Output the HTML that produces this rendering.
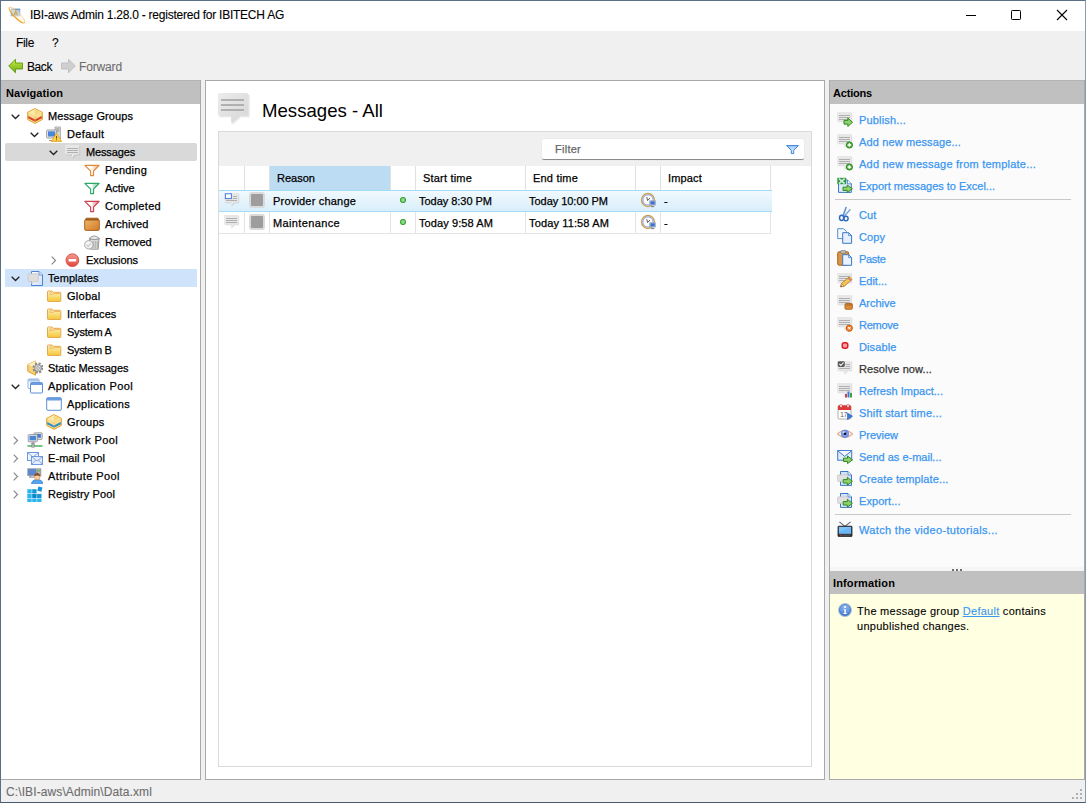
<!DOCTYPE html>
<html><head><meta charset="utf-8"><title>IBI-aws Admin</title>
<style>
*{box-sizing:border-box;margin:0;padding:0}
html,body{width:1086px;height:803px;overflow:hidden;background:#f0f0f0}
body{font-family:"Liberation Sans",sans-serif;font-size:11px;color:#000;position:relative}
.abs{position:absolute}
.t{white-space:nowrap;position:absolute;line-height:14px;-webkit-text-stroke:.25px}
.b{position:absolute}
a{color:#3a96f0}
</style></head><body>

<div class="b" style="left:0px;top:0px;width:1086px;height:803px;background:#f0f0f0;border:1px solid #5a7088;border-right-color:#8a9ab0;border-bottom-color:#4a5a6c;"></div>
<div class="b" style="left:1px;top:1px;width:1084px;height:30px;background:#fff;"></div>
<svg class="abs" style="left:8px;top:6px" width="18" height="18" viewBox="0 0 18 18"><defs><linearGradient id="rg" x1="0" y1="0" x2="0" y2="1"><stop offset="0" stop-color="#f6c060" stop-opacity=".25"/><stop offset=".55" stop-color="#f2b040" stop-opacity=".7"/><stop offset="1" stop-color="#eea020"/></linearGradient></defs><rect x="3" y="3" width="9" height="7" fill="#a9c9ee" stroke="#7f9cc0" stroke-width=".5"/><path d="M3 3.3h9" stroke="#5c7ea8" stroke-width=".8"/><path d="M6 9.2 L7.6 4.8 L9.6 9.2 M6.6 7.8h2.4" fill="none" stroke="#8a7414" stroke-width="1.2"/><ellipse cx="9" cy="9" rx="10.6" ry="2.9" transform="rotate(45 9 9)" fill="#fff4d8" fill-opacity=".45" stroke="url(#rg)" stroke-width="1.3"/></svg>
<span class="t" style="left:30px;top:8px;font-size:12px;-webkit-text-stroke:.1px;letter-spacing:-0.238px;">IBI-aws Admin 1.28.0 - registered for IBITECH AG</span>
<svg class="abs" style="left:960px;top:5px" width="120" height="22" viewBox="0 0 120 22"><path d="M6 10.5h10" stroke="#000" stroke-width="1"/><rect x="51.5" y="5.5" width="9" height="9" fill="none" stroke="#000" stroke-width="1" rx=".8"/><path d="M97 5l10 10M107 5l-10 10" stroke="#000" stroke-width="1.1"/></svg>
<span class="t" style="left:16px;top:36px;font-size:12px;-webkit-text-stroke:.1px;letter-spacing:-0.336px;">File</span>
<span class="t" style="left:52px;top:36px;font-size:12px;-webkit-text-stroke:.1px;letter-spacing:-1.688px;">?</span>
<svg class="abs" style="left:8px;top:58px" width="16" height="16" viewBox="0 0 16 16"><defs><linearGradient id="gg" x1="0" y1="0" x2="0" y2="1"><stop offset="0" stop-color="#c8e84a"/><stop offset="1" stop-color="#6fae10"/></linearGradient></defs><path d="M.7 8 L7.5 1.2 V5 H14.5 V11 H7.5 V14.8 Z" fill="url(#gg)" stroke="#5c9a0c" stroke-width=".9" stroke-linejoin="round"/></svg>
<span class="t" style="left:27px;top:60px;font-size:12px;-webkit-text-stroke:.1px;letter-spacing:-0.422px;">Back</span>
<svg class="abs" style="left:60px;top:58px" width="16" height="16" viewBox="0 0 16 16"><path d="M15.3 8 L8.5 1.2 V5 H1.5 V11 H8.5 V14.8 Z" fill="#cfcfcf" stroke="#bdbdbd" stroke-width=".9" stroke-linejoin="round"/></svg>
<span class="t" style="left:79px;top:60px;color:#6d6d6d;font-size:12px;-webkit-text-stroke:.1px;letter-spacing:-0.145px;">Forward</span>
<div class="b" style="left:1px;top:80px;width:200px;height:700px;background:#fff;border-right:1px solid #a9a9a9;border-bottom:1px solid #a9a9a9;"></div>
<div class="b" style="left:1px;top:80px;width:199px;height:24px;background:#c0c0c0;border-top:1px solid #b4b4b4;"></div>
<span class="t" style="left:6px;top:86px;font-weight:bold;-webkit-text-stroke:0;letter-spacing:0.077px;">Navigation</span>
<div class="b" style="left:5px;top:143px;width:192px;height:18px;background:#d9d9d9;border-radius:2px;"></div>
<div class="b" style="left:5px;top:269px;width:192px;height:18px;background:#cfe4fb;"></div>
<svg class="abs" style="left:11px;top:114px" width="9" height="6" viewBox="0 0 9 6"><path d="M.7 .7 L4.5 4.5 L8.3 .7" fill="none" stroke="#262626" stroke-width="1.4"/></svg>
<svg class="abs" style="left:27px;top:108px" width="16" height="16" viewBox="0 0 16 16"><path d="M8 .6 L15.3 4.3 V11.5 L8 15.4 L.7 11.5 V4.3 Z" fill="#f9dc8c" stroke="#e0a030" stroke-width="1"/><path d="M1.2 7.9 L8 11.4 L14.8 7.9 V10.3 L8 13.8 L1.2 10.3 Z" fill="#d8402a"/><path d="M1.2 4.5 L8 8 L14.8 4.5 L8 1.2Z" fill="#fbe9ac"/><path d="M8 1.6 L8 7.6 L13.6 4.6Z" fill="#f6cf6a" opacity=".7"/><path d="M8 8 V15" stroke="#e8b860" stroke-width=".6"/></svg>
<span class="t" style="left:48px;top:109px;letter-spacing:0.088px;">Message Groups</span>
<svg class="abs" style="left:30px;top:132px" width="9" height="6" viewBox="0 0 9 6"><path d="M.7 .7 L4.5 4.5 L8.3 .7" fill="none" stroke="#262626" stroke-width="1.4"/></svg>
<svg class="abs" style="left:46px;top:126px" width="16" height="16" viewBox="0 0 16 16"><rect x="9" y="1" width="5.5" height="12" fill="#d8d8d8" stroke="#9a9a9a" stroke-width=".7"/><rect x="10.3" y="2.5" width="3" height="1" fill="#888"/><rect x="10.3" y="4.5" width="3" height="1" fill="#888"/><rect x=".6" y="4" width="10" height="8" rx="1" fill="#e8e8e8" stroke="#8c8c8c" stroke-width=".8"/><rect x="2" y="5.3" width="7.2" height="5.2" fill="#4a86d8"/><path d="M3 14.5h6" stroke="#999" stroke-width="1"/><path d="M10.5 7 L15.6 15.4 H5.4 Z" fill="#fbd34a" stroke="#e09a20" stroke-width=".8" stroke-linejoin="round"/><path d="M10.5 10v2.6M10.5 13.4v.9" stroke="#7a4a00" stroke-width="1"/></svg>
<span class="t" style="left:67px;top:127px;letter-spacing:0.377px;">Default</span>
<svg class="abs" style="left:49px;top:150px" width="9" height="6" viewBox="0 0 9 6"><path d="M.7 .7 L4.5 4.5 L8.3 .7" fill="none" stroke="#262626" stroke-width="1.4"/></svg>
<svg class="abs" style="left:65px;top:144px" width="16" height="16" viewBox="0 0 16 16"><path d="M1.3 2h14v9.4H11L7.6 15v-3.6H1.3z" fill="#000" opacity=".07"/><path d="M.9 1.6h14v9.4H10.8L7.3 14.6v-3.6H.9z" fill="#000" opacity=".06"/><path d="M.2 1h14.2v9.4H10.3L7 14v-3.6H.2z" fill="#e7e7e7"/><path d="M2 4.5h11M2 6.5h11M2 8.5h11" stroke="#b0b0b0" stroke-width="1"/></svg>
<span class="t" style="left:86px;top:145px;letter-spacing:-0.143px;">Messages</span>
<svg class="abs" style="left:84px;top:162px" width="16" height="16" viewBox="0 0 16 16"><defs><linearGradient id="fge08a3c" x1="0" y1="0" x2="1" y2="0"><stop offset=".45" stop-color="#fff"/><stop offset="1" stop-color="#e08a3c" stop-opacity=".55"/></linearGradient></defs><path d="M.8 3.4 H15.2 L9.6 9 V13.6 H6.6 V9 Z" fill="url(#fge08a3c)" stroke="#e08a3c" stroke-width="1.1" stroke-linejoin="round"/></svg>
<span class="t" style="left:105px;top:163px;letter-spacing:0.232px;">Pending</span>
<svg class="abs" style="left:84px;top:180px" width="16" height="16" viewBox="0 0 16 16"><defs><linearGradient id="fg2fa86a" x1="0" y1="0" x2="1" y2="0"><stop offset=".45" stop-color="#fff"/><stop offset="1" stop-color="#2fa86a" stop-opacity=".55"/></linearGradient></defs><path d="M.8 3.4 H15.2 L9.6 9 V13.6 H6.6 V9 Z" fill="url(#fg2fa86a)" stroke="#2fa86a" stroke-width="1.1" stroke-linejoin="round"/></svg>
<span class="t" style="left:105px;top:181px;letter-spacing:-0.078px;">Active</span>
<svg class="abs" style="left:84px;top:198px" width="16" height="16" viewBox="0 0 16 16"><defs><linearGradient id="fgd04050" x1="0" y1="0" x2="1" y2="0"><stop offset=".45" stop-color="#fff"/><stop offset="1" stop-color="#d04050" stop-opacity=".55"/></linearGradient></defs><path d="M.8 3.4 H15.2 L9.6 9 V13.6 H6.6 V9 Z" fill="url(#fgd04050)" stroke="#d04050" stroke-width="1.1" stroke-linejoin="round"/></svg>
<span class="t" style="left:105px;top:199px;letter-spacing:0.311px;">Completed</span>
<svg class="abs" style="left:84px;top:216px" width="16" height="16" viewBox="0 0 16 16"><defs><linearGradient id="ar" x1="0" y1="0" x2="1" y2="1"><stop offset="0" stop-color="#f2b86c"/><stop offset="1" stop-color="#d07c28"/></linearGradient></defs><path d="M2.2 2.2 H13.8 L15.3 4.6 V13 Q15.3 14.4 13.9 14.4 H2.1 Q.7 14.4 .7 13 V4.6 Z" fill="url(#ar)" stroke="#a8641e" stroke-width="1" stroke-linejoin="round"/><path d="M2.4 2.6 H13.6 L14.8 4.6 H1.2 Z" fill="#9a5a1c"/></svg>
<span class="t" style="left:105px;top:217px;letter-spacing:0.088px;">Archived</span>
<svg class="abs" style="left:84px;top:234px" width="16" height="16" viewBox="0 0 16 16"><path d="M5.6 5 H15 L14.2 15.2 H6.6 Z" fill="#dcdcdc" stroke="#909090" stroke-width=".9"/><path d="M5 4.6 Q10.2 -.6 15.6 4.6 Q10.2 6.6 5 4.6Z" fill="#ececec" stroke="#909090" stroke-width=".9"/><path d="M9 7v7M11.2 7v7M13.3 7v7" stroke="#a4a4a4" stroke-width=".9"/><circle cx="4.8" cy="10.8" r="4.2" fill="#f2f2f2" stroke="#a0a0a0" stroke-width=".9"/><path d="M2.6 10.8l1.6 1.6 2.8-3" fill="none" stroke="#c8c8c8" stroke-width="1.1"/></svg>
<span class="t" style="left:105px;top:235px;letter-spacing:-0.083px;">Removed</span>
<svg class="abs" style="left:51px;top:256px" width="6" height="9" viewBox="0 0 6 9"><path d="M.7 .7 L4.5 4.5 L.7 8.3" fill="none" stroke="#8a8a8a" stroke-width="1.2"/></svg>
<svg class="abs" style="left:65px;top:252px" width="16" height="16" viewBox="0 0 16 16"><defs><linearGradient id="ex" x1="0" y1="0" x2="0" y2="1"><stop offset="0" stop-color="#f49a90"/><stop offset="1" stop-color="#e0443a"/></linearGradient></defs><circle cx="7.4" cy="8.2" r="6.4" fill="url(#ex)" stroke="#d8584e" stroke-width="1"/><rect x="3.6" y="7" width="7.6" height="2.5" rx=".5" fill="#fff"/></svg>
<span class="t" style="left:86px;top:253px;letter-spacing:-0.058px;">Exclusions</span>
<svg class="abs" style="left:11px;top:276px" width="9" height="6" viewBox="0 0 9 6"><path d="M.7 .7 L4.5 4.5 L8.3 .7" fill="none" stroke="#262626" stroke-width="1.4"/></svg>
<svg class="abs" style="left:27px;top:270px" width="16" height="16" viewBox="0 0 16 16"><defs><linearGradient id="tp" x1="0" y1="0" x2="1" y2="1"><stop offset="0" stop-color="#fff"/><stop offset="1" stop-color="#cfe0f6"/></linearGradient></defs><path d="M4.5 1.5 H12 L15.5 5 V15.5 H4.5 Z" fill="url(#tp)" stroke="#4f81d6" stroke-width="1" stroke-linejoin="round"/><path d="M12 1.5 V5 H15.5" fill="#e8f0fc" stroke="#4f81d6" stroke-width=".8"/><path d="M1 4.6 Q1 3.8 1.8 3.8 H10.6 Q11.4 3.8 11.4 4.6 V10.8 Q11.4 11.6 10.6 11.6 H6.8 L4.6 14 L4.8 11.6 H1.8 Q1 11.6 1 10.8Z" fill="#dedede" stroke="#c4c4c4" stroke-width=".7"/></svg>
<span class="t" style="left:48px;top:271px;letter-spacing:0.040px;">Templates</span>
<svg class="abs" style="left:46px;top:288px" width="16" height="16" viewBox="0 0 16 16"><defs><linearGradient id="fo" x1="0" y1="0" x2="0" y2="1"><stop offset="0" stop-color="#fef4c4"/><stop offset="1" stop-color="#f5c632"/></linearGradient></defs><path d="M1.5 3.8 Q1.5 3 2.3 3 H6 L7.2 4.3 H14 Q14.8 4.3 14.8 5.1 V12.7 Q14.8 13.5 14 13.5 H2.3 Q1.5 13.5 1.5 12.7Z" fill="url(#fo)" stroke="#e6a84e" stroke-width="1"/><path d="M3 6.2 H7.6 L8.6 5.5 H13.6" fill="none" stroke="#e9b25c" stroke-width=".9"/><path d="M3 4.8h3.4" stroke="#f1c070" stroke-width=".9"/></svg>
<span class="t" style="left:67px;top:289px;letter-spacing:0.284px;">Global</span>
<svg class="abs" style="left:46px;top:306px" width="16" height="16" viewBox="0 0 16 16"><defs><linearGradient id="fo" x1="0" y1="0" x2="0" y2="1"><stop offset="0" stop-color="#fef4c4"/><stop offset="1" stop-color="#f5c632"/></linearGradient></defs><path d="M1.5 3.8 Q1.5 3 2.3 3 H6 L7.2 4.3 H14 Q14.8 4.3 14.8 5.1 V12.7 Q14.8 13.5 14 13.5 H2.3 Q1.5 13.5 1.5 12.7Z" fill="url(#fo)" stroke="#e6a84e" stroke-width="1"/><path d="M3 6.2 H7.6 L8.6 5.5 H13.6" fill="none" stroke="#e9b25c" stroke-width=".9"/><path d="M3 4.8h3.4" stroke="#f1c070" stroke-width=".9"/></svg>
<span class="t" style="left:67px;top:307px;letter-spacing:0.119px;">Interfaces</span>
<svg class="abs" style="left:46px;top:324px" width="16" height="16" viewBox="0 0 16 16"><defs><linearGradient id="fo" x1="0" y1="0" x2="0" y2="1"><stop offset="0" stop-color="#fef4c4"/><stop offset="1" stop-color="#f5c632"/></linearGradient></defs><path d="M1.5 3.8 Q1.5 3 2.3 3 H6 L7.2 4.3 H14 Q14.8 4.3 14.8 5.1 V12.7 Q14.8 13.5 14 13.5 H2.3 Q1.5 13.5 1.5 12.7Z" fill="url(#fo)" stroke="#e6a84e" stroke-width="1"/><path d="M3 6.2 H7.6 L8.6 5.5 H13.6" fill="none" stroke="#e9b25c" stroke-width=".9"/><path d="M3 4.8h3.4" stroke="#f1c070" stroke-width=".9"/></svg>
<span class="t" style="left:67px;top:325px;letter-spacing:-0.221px;">System A</span>
<svg class="abs" style="left:46px;top:342px" width="16" height="16" viewBox="0 0 16 16"><defs><linearGradient id="fo" x1="0" y1="0" x2="0" y2="1"><stop offset="0" stop-color="#fef4c4"/><stop offset="1" stop-color="#f5c632"/></linearGradient></defs><path d="M1.5 3.8 Q1.5 3 2.3 3 H6 L7.2 4.3 H14 Q14.8 4.3 14.8 5.1 V12.7 Q14.8 13.5 14 13.5 H2.3 Q1.5 13.5 1.5 12.7Z" fill="url(#fo)" stroke="#e6a84e" stroke-width="1"/><path d="M3 6.2 H7.6 L8.6 5.5 H13.6" fill="none" stroke="#e9b25c" stroke-width=".9"/><path d="M3 4.8h3.4" stroke="#f1c070" stroke-width=".9"/></svg>
<span class="t" style="left:67px;top:343px;letter-spacing:-0.322px;">System B</span>
<svg class="abs" style="left:27px;top:360px" width="16" height="16" viewBox="0 0 16 16"><path d="M8.5 1 L.8 4.6 V11.4 L8.5 15.2 Z" fill="#f8d27a" stroke="#e0a030" stroke-width="1" stroke-linejoin="round"/><path d="M8.5 1 L.8 4.6 L8.5 8.2Z" fill="#fdeebc"/><circle cx="11" cy="8" r="4.3" fill="none" stroke="#8c8c8c" stroke-width="2.6" stroke-dasharray="2 1.38"/><circle cx="11" cy="8" r="3.3" fill="#e2e2e2" stroke="#8a8a8a" stroke-width=".9"/><circle cx="11" cy="8" r="1.3" fill="#fff" stroke="#8a8a8a" stroke-width=".8"/></svg>
<span class="t" style="left:48px;top:361px;letter-spacing:-0.014px;">Static Messages</span>
<svg class="abs" style="left:11px;top:384px" width="9" height="6" viewBox="0 0 9 6"><path d="M.7 .7 L4.5 4.5 L8.3 .7" fill="none" stroke="#262626" stroke-width="1.4"/></svg>
<svg class="abs" style="left:27px;top:378px" width="16" height="16" viewBox="0 0 16 16"><rect x="1" y="1" width="11" height="9.5" rx="1" fill="#fff" stroke="#8fb0dc" stroke-width="1"/><rect x="1" y="1" width="11" height="2.4" rx="1" fill="#a8c4e8"/><rect x="3.5" y="4.5" width="12" height="10.5" rx="1" fill="#fff" stroke="#5a8fd8" stroke-width="1"/><rect x="3.5" y="4.5" width="12" height="2.6" rx="1" fill="#6a9ce0"/></svg>
<span class="t" style="left:48px;top:379px;letter-spacing:0.382px;">Application Pool</span>
<svg class="abs" style="left:46px;top:396px" width="16" height="16" viewBox="0 0 16 16"><rect x=".7" y="1.7" width="14.6" height="12.6" rx="1.2" fill="#fff" stroke="#5a8fd8" stroke-width="1"/><rect x=".7" y="1.7" width="14.6" height="2.8" rx="1.2" fill="#6a9ce0"/></svg>
<span class="t" style="left:67px;top:397px;letter-spacing:0.306px;">Applications</span>
<svg class="abs" style="left:46px;top:414px" width="16" height="16" viewBox="0 0 16 16"><path d="M8 .6 L15.3 4.3 V11.5 L8 15.4 L.7 11.5 V4.3 Z" fill="#f9dc8c" stroke="#e0a030" stroke-width="1"/><path d="M1.2 7.9 L8 11.4 L14.8 7.9 V10.3 L8 13.8 L1.2 10.3 Z" fill="#2a8fd0"/><path d="M1.2 4.5 L8 8 L14.8 4.5 L8 1.2Z" fill="#fbe9ac"/><path d="M8 1.6 L8 7.6 L13.6 4.6Z" fill="#f6cf6a" opacity=".7"/><path d="M8 8 V15" stroke="#e8b860" stroke-width=".6"/></svg>
<span class="t" style="left:67px;top:415px;letter-spacing:0.237px;">Groups</span>
<svg class="abs" style="left:13px;top:436px" width="6" height="9" viewBox="0 0 6 9"><path d="M.7 .7 L4.5 4.5 L.7 8.3" fill="none" stroke="#8a8a8a" stroke-width="1.2"/></svg>
<svg class="abs" style="left:27px;top:432px" width="16" height="16" viewBox="0 0 16 16"><rect x="7" y=".8" width="8.2" height="6.6" rx=".8" fill="#e4e4e4" stroke="#8a8a8a" stroke-width=".8"/><rect x="8.3" y="2" width="5.6" height="3.8" fill="#4a7ad0"/><rect x="1.2" y="2.6" width="9.2" height="7.2" rx=".8" fill="#e4e4e4" stroke="#8a8a8a" stroke-width=".8"/><rect x="2.5" y="3.9" width="6.6" height="4.4" fill="#4a86d8"/><path d="M4 11.2h4M6 10v3" stroke="#8a8a8a" stroke-width="1"/><path d="M.5 14h15" stroke="#3cb050" stroke-width="1.4"/><rect x="4.8" y="12.6" width="2.6" height="2.6" fill="#b8b8b8" stroke="#777" stroke-width=".5"/></svg>
<span class="t" style="left:48px;top:433px;letter-spacing:0.382px;">Network Pool</span>
<svg class="abs" style="left:13px;top:454px" width="6" height="9" viewBox="0 0 6 9"><path d="M.7 .7 L4.5 4.5 L.7 8.3" fill="none" stroke="#8a8a8a" stroke-width="1.2"/></svg>
<svg class="abs" style="left:27px;top:450px" width="16" height="16" viewBox="0 0 16 16"><rect x=".5" y="2.5" width="11" height="8" fill="#eef3fd" stroke="#7098e2" stroke-width="1"/><path d="M.8 2.8 L6 7 L11.2 2.8" fill="none" stroke="#7098e2" stroke-width=".8"/><rect x="4.5" y="6.5" width="11" height="8" fill="#e4edfc" stroke="#7098e2" stroke-width="1"/><path d="M4.8 6.8 L10 11 L15.2 6.8M4.8 14.2 L8.6 10M15.2 14.2 L11.4 10" fill="none" stroke="#7098e2" stroke-width=".8"/></svg>
<span class="t" style="left:48px;top:451px;letter-spacing:0.068px;">E-mail Pool</span>
<svg class="abs" style="left:13px;top:472px" width="6" height="9" viewBox="0 0 6 9"><path d="M.7 .7 L4.5 4.5 L.7 8.3" fill="none" stroke="#8a8a8a" stroke-width="1.2"/></svg>
<svg class="abs" style="left:27px;top:468px" width="16" height="16" viewBox="0 0 16 16"><rect x=".8" y=".8" width="8.6" height="6.8" fill="#5d86cc" stroke="#8a96aa" stroke-width=".8"/><rect x="10.3" y=".8" width="3.6" height="7" fill="#b8b8b8" stroke="#7a7a7a" stroke-width=".6"/><rect x="11.2" y="2" width="1.8" height="1.6" fill="#4c4"/><path d="M2 9.2h5.5M3.5 8v1" stroke="#9a9a9a" stroke-width="1.3"/><path d="M4.4 15.8 Q5 11.6 10.2 11.6 Q15.4 11.6 15.8 15.8Z" fill="#56a4f0" stroke="#2a70c8" stroke-width=".6"/><circle cx="10.2" cy="8.8" r="2.9" fill="#f6cfa4" stroke="#c88a50" stroke-width=".5"/><path d="M7.2 8.4 Q7.4 5 10.2 5 Q13 5 13.2 8.4 Q10.2 6.4 7.2 8.4Z" fill="#8a4a1c"/></svg>
<span class="t" style="left:48px;top:469px;letter-spacing:0.425px;">Attribute Pool</span>
<svg class="abs" style="left:13px;top:490px" width="6" height="9" viewBox="0 0 6 9"><path d="M.7 .7 L4.5 4.5 L.7 8.3" fill="none" stroke="#8a8a8a" stroke-width="1.2"/></svg>
<svg class="abs" style="left:27px;top:486px" width="16" height="16" viewBox="0 0 16 16"><g fill="#2db5ee"><rect x=".3" y="3.2" width="4.4" height="4.2"/><rect x="5.2" y="3.2" width="4.4" height="4.2" fill="#1196d8"/><rect x=".3" y="7.9" width="4.4" height="4.2"/><rect x="5.2" y="7.9" width="4.4" height="4.2" fill="#0b86c9"/><rect x="10.1" y="7.9" width="4.4" height="4.2" fill="#1196d8"/><rect x=".3" y="12.6" width="4.4" height="3.4"/><rect x="5.2" y="12.6" width="4.4" height="3.4"/><rect x="10.1" y="12.6" width="4.4" height="3.4"/><rect x="10.8" y="1" width="4.2" height="4.2" fill="#1196d8" transform="rotate(14 12.9 3.1)"/></g></svg>
<span class="t" style="left:48px;top:487px;letter-spacing:0.121px;">Registry Pool</span>
<div class="b" style="left:205px;top:80px;width:620px;height:700px;background:#fff;border:1px solid #a9a9a9;"></div>
<svg class="abs" style="left:218px;top:93px" width="34" height="34" viewBox="0 0 34 34"><path d="M1.8 2h30.2v22.6H23.4L14.6 32.4v-7.8H1.8z" fill="#000" opacity=".05"/><path d="M1 1.2h30.2v22.6H22.6L13.8 31.6v-7.8H1z" fill="#000" opacity=".06"/><defs><linearGradient id="lm" x1="0" y1="0" x2="1" y2="1"><stop offset="0" stop-color="#ececec"/><stop offset="1" stop-color="#d6d6d6"/></linearGradient></defs><path d="M1.5 0H28.5Q30 0 30 1.5V21Q30 22.5 28.5 22.5H22L13.3 30.5L13 22.5H1.5Q0 22.5 0 21V1.5Q0 0 1.5 0Z" fill="url(#lm)"/><path d="M3 7h23M3 12h23M3 17h23" stroke="#b0b0b0" stroke-width="2"/></svg>
<span class="t" style="left:262px;top:100px;font-size:18.6px;letter-spacing:0.007px;line-height:22px;-webkit-text-stroke:0;">Messages - All</span>
<div class="b" style="left:218px;top:131px;width:594px;height:636px;background:#fff;border:1px solid #dadada;"></div>
<div class="b" style="left:219px;top:132px;width:592px;height:34px;background:#f0f0f0;"></div>
<div class="b" style="left:542px;top:139px;width:262px;height:21px;background:#fff;border-bottom:1px solid #8a8a8a;border-radius:2px;box-shadow:0 0 0 .5px #e6e6e6;"></div>
<span class="t" style="left:555px;top:142px;color:#666;letter-spacing:0.258px;">Filter</span>
<svg class="abs" style="left:786px;top:145px" width="13" height="10" viewBox="0 0 13 10"><defs><linearGradient id="fb" x1="0" y1="0" x2="0" y2="1"><stop offset="0" stop-color="#9cc8f8"/><stop offset="1" stop-color="#eef6ff"/></linearGradient></defs><path d="M.6 .6 H12.4 L7.7 5.4 V8.6 H5.3 V5.4 Z" fill="url(#fb)" stroke="#3f7fd6" stroke-width="1" stroke-linejoin="round"/></svg>
<div class="b" style="left:270px;top:166px;width:121px;height:24px;background:#bcdcf4;"></div>
<div class="b" style="left:219px;top:190px;width:552px;height:1px;background:#e4e4e4;"></div>
<div class="b" style="left:219px;top:190px;width:553px;height:22px;background:#e5f3fb;border-top:1px solid #a4dcf8;border-bottom:1px solid #a4dcf8;background:linear-gradient(#f0f9fe,#d9eefa);"></div>
<div class="b" style="left:219px;top:233px;width:552px;height:1px;background:#e4e4e4;"></div>
<div class="b" style="left:244px;top:166px;width:1px;height:24px;background:#e0e0e0;"></div>
<div class="b" style="left:244px;top:212px;width:1px;height:21px;background:#e4e4e4;"></div>
<div class="b" style="left:269px;top:166px;width:1px;height:24px;background:#e0e0e0;"></div>
<div class="b" style="left:269px;top:212px;width:1px;height:21px;background:#e4e4e4;"></div>
<div class="b" style="left:390px;top:166px;width:1px;height:24px;background:#e0e0e0;"></div>
<div class="b" style="left:390px;top:212px;width:1px;height:21px;background:#e4e4e4;"></div>
<div class="b" style="left:415px;top:166px;width:1px;height:24px;background:#e0e0e0;"></div>
<div class="b" style="left:415px;top:212px;width:1px;height:21px;background:#e4e4e4;"></div>
<div class="b" style="left:525px;top:166px;width:1px;height:24px;background:#e0e0e0;"></div>
<div class="b" style="left:525px;top:212px;width:1px;height:21px;background:#e4e4e4;"></div>
<div class="b" style="left:635px;top:166px;width:1px;height:24px;background:#e0e0e0;"></div>
<div class="b" style="left:635px;top:212px;width:1px;height:21px;background:#e4e4e4;"></div>
<div class="b" style="left:660px;top:166px;width:1px;height:24px;background:#e0e0e0;"></div>
<div class="b" style="left:660px;top:212px;width:1px;height:21px;background:#e4e4e4;"></div>
<div class="b" style="left:770px;top:166px;width:1px;height:24px;background:#e0e0e0;"></div>
<div class="b" style="left:770px;top:212px;width:1px;height:21px;background:#e4e4e4;"></div>
<span class="t" style="left:277px;top:171px;letter-spacing:0.013px;">Reason</span>
<span class="t" style="left:423px;top:171px;letter-spacing:0.192px;">Start time</span>
<span class="t" style="left:533px;top:171px;letter-spacing:0.197px;">End time</span>
<span class="t" style="left:668px;top:171px;letter-spacing:0.164px;">Impact</span>
<svg class="abs" style="left:224px;top:192px" width="16" height="16" viewBox="0 0 16 16"><path d="M1.3 2h14v9.4H11L7.6 15v-3.6H1.3z" fill="#000" opacity=".07"/><path d="M.9 1.6h14v9.4H10.8L7.3 14.6v-3.6H.9z" fill="#000" opacity=".06"/><path d="M.2 1h14.2v9.4H10.3L7 14v-3.6H.2z" fill="#e7e7e7"/><path d="M8.8 4.5h4.2M8.8 6.5h4.2M2 8.5h11" stroke="#b0b0b0" stroke-width="1"/><rect x="1.4" y="1.6" width="6" height="5" fill="#fff" stroke="#4a7cd4" stroke-width="1"/><path d="M1 1.7h6.8" stroke="#7aa0e4" stroke-width="1.2"/></svg>
<div class="b" style="left:249px;top:192px;width:16px;height:16px;background:#9d9d9d;border:2px solid #dadada;border-radius:3px;"></div>
<span class="t" style="left:273px;top:194px;letter-spacing:0.193px;">Provider change</span>
<svg class="abs" style="left:400px;top:197px" width="6" height="6" viewBox="0 0 6 6"><circle cx="3" cy="3" r="2.5" fill="#8fd88c" stroke="#3aa636" stroke-width="1.2"/></svg>
<span class="t" style="left:419px;top:194px;letter-spacing:-0.029px;">Today 8:30 PM</span>
<span class="t" style="left:529px;top:194px;letter-spacing:-0.036px;">Today 10:00 PM</span>
<svg class="abs" style="left:640px;top:192px" width="16" height="16" viewBox="0 0 16 16"><circle cx="8" cy="8" r="6.4" fill="#fff" stroke="#c9a257" stroke-width="1.5"/><circle cx="8" cy="8" r="5.1" fill="#fdfdff" stroke="#7f9be4" stroke-width=".9"/><path d="M6.8 5.2 L7.6 8.6 L10 6" fill="none" stroke="#5a5a5a" stroke-width="1"/><rect x="9.6" y="8.6" width="6" height="4.6" rx=".5" fill="#c8d4e8" stroke="#8a96a8" stroke-width=".6"/><rect x="10.4" y="9.3" width="4.4" height="3.2" fill="#3f72cc"/><path d="M11.2 14.6h3" stroke="#8a8a8a" stroke-width="1.2"/></svg>
<span class="t" style="left:664px;top:194px;letter-spacing:0.328px;">-</span>
<svg class="abs" style="left:224px;top:214px" width="16" height="16" viewBox="0 0 16 16"><path d="M1.3 2h14v9.4H11L7.6 15v-3.6H1.3z" fill="#000" opacity=".07"/><path d="M.9 1.6h14v9.4H10.8L7.3 14.6v-3.6H.9z" fill="#000" opacity=".06"/><path d="M.2 1h14.2v9.4H10.3L7 14v-3.6H.2z" fill="#e7e7e7"/><path d="M2 4.5h11M2 6.5h11M2 8.5h11" stroke="#b0b0b0" stroke-width="1"/></svg>
<div class="b" style="left:249px;top:214px;width:16px;height:16px;background:#9d9d9d;border:2px solid #dadada;border-radius:3px;"></div>
<span class="t" style="left:273px;top:216px;letter-spacing:0.364px;">Maintenance</span>
<svg class="abs" style="left:400px;top:219px" width="6" height="6" viewBox="0 0 6 6"><circle cx="3" cy="3" r="2.5" fill="#8fd88c" stroke="#3aa636" stroke-width="1.2"/></svg>
<span class="t" style="left:419px;top:216px;letter-spacing:0.094px;">Today 9:58 AM</span>
<span class="t" style="left:529px;top:216px;letter-spacing:0.137px;">Today 11:58 AM</span>
<svg class="abs" style="left:640px;top:214px" width="16" height="16" viewBox="0 0 16 16"><circle cx="8" cy="8" r="6.4" fill="#fff" stroke="#c9a257" stroke-width="1.5"/><circle cx="8" cy="8" r="5.1" fill="#fdfdff" stroke="#7f9be4" stroke-width=".9"/><path d="M6.8 5.2 L7.6 8.6 L10 6" fill="none" stroke="#5a5a5a" stroke-width="1"/><rect x="9.6" y="8.6" width="6" height="4.6" rx=".5" fill="#c8d4e8" stroke="#8a96a8" stroke-width=".6"/><rect x="10.4" y="9.3" width="4.4" height="3.2" fill="#3f72cc"/><path d="M11.2 14.6h3" stroke="#8a8a8a" stroke-width="1.2"/></svg>
<span class="t" style="left:664px;top:216px;letter-spacing:0.328px;">-</span>
<div class="b" style="left:829px;top:80px;width:256px;height:700px;background:#fbfbfb;border-left:1px solid #a9a9a9;border-bottom:1px solid #a9a9a9;border-right:1px solid #a9a9a9;"></div>
<div class="b" style="left:830px;top:80px;width:254px;height:24px;background:#c0c0c0;border-top:1px solid #b4b4b4;"></div>
<span class="t" style="left:833px;top:86px;font-weight:bold;-webkit-text-stroke:0;letter-spacing:-0.192px;">Actions</span>
<svg class="abs" style="left:837px;top:111px" width="16" height="16" viewBox="0 0 16 16"><path d="M1.3 2h14v9.4H11L7.6 15v-3.6H1.3z" fill="#000" opacity=".07"/><path d="M.9 1.6h14v9.4H10.8L7.3 14.6v-3.6H.9z" fill="#000" opacity=".06"/><path d="M.2 1h14.2v9.4H10.3L7 14v-3.6H.2z" fill="#e7e7e7"/><path d="M2 4.5h11M2 6.5h11M2 8.5h11" stroke="#b0b0b0" stroke-width="1"/><path d="M7 9.38 H10.82 V7 L15.5 11.25 L10.82 15.5 V13.12 H7 Z" fill="#8fcf6e" stroke="#2f8a1e" stroke-width="1" stroke-linejoin="round"/></svg>
<span class="t" style="left:859px;top:113px;color:#3a96f0;letter-spacing:0.175px;">Publish...</span>
<svg class="abs" style="left:837px;top:133px" width="16" height="16" viewBox="0 0 16 16"><path d="M1.3 2h14v9.4H11L7.6 15v-3.6H1.3z" fill="#000" opacity=".07"/><path d="M.9 1.6h14v9.4H10.8L7.3 14.6v-3.6H.9z" fill="#000" opacity=".06"/><path d="M.2 1h14.2v9.4H10.3L7 14v-3.6H.2z" fill="#e7e7e7"/><path d="M2 4.5h11M2 6.5h11M2 8.5h11" stroke="#b0b0b0" stroke-width="1"/><circle cx="12.4" cy="12" r="3.1" fill="#4fae3c" stroke="#2f8a22" stroke-width="1"/><path d="M12.4 10.2v3.6M10.6 12h3.6" stroke="#fff" stroke-width="1.3"/></svg>
<span class="t" style="left:859px;top:135px;color:#3a96f0;letter-spacing:0.129px;">Add new message...</span>
<svg class="abs" style="left:837px;top:155px" width="16" height="16" viewBox="0 0 16 16"><path d="M1.3 2h14v9.4H11L7.6 15v-3.6H1.3z" fill="#000" opacity=".07"/><path d="M.9 1.6h14v9.4H10.8L7.3 14.6v-3.6H.9z" fill="#000" opacity=".06"/><path d="M.2 1h14.2v9.4H10.3L7 14v-3.6H.2z" fill="#e7e7e7"/><path d="M2 4.5h11M2 6.5h11M2 8.5h11" stroke="#b0b0b0" stroke-width="1"/><circle cx="12.4" cy="12" r="3.1" fill="#4fae3c" stroke="#2f8a22" stroke-width="1"/><path d="M12.4 10.2v3.6M10.6 12h3.6" stroke="#fff" stroke-width="1.3"/></svg>
<span class="t" style="left:859px;top:157px;color:#3a96f0;letter-spacing:0.220px;">Add new message from template...</span>
<svg class="abs" style="left:837px;top:177px" width="16" height="16" viewBox="0 0 16 16"><path d="M1.5 3 H10.5 L14.3 6.8 V15.4 H1.5 Z" fill="#dfeafb" stroke="#3c78c8" stroke-width="1" stroke-linejoin="round"/><path d="M10.5 3 V6.8 H14.3" fill="#f4f8fe" stroke="#3c78c8" stroke-width=".8"/><path d="M.3 .8 H9.2 V7.2 H.3 Z" fill="#2f9a46"/><path d="M2 1.6 L7.6 6.6M7.6 1.6 L2 6.6" stroke="#d8f0dc" stroke-width="1.5"/><path d="M6 10.13 H10.23 V8 L15.4 11.8 L10.23 15.6 V13.47 H6 Z" fill="#8fcf6e" stroke="#2f8a1e" stroke-width="1" stroke-linejoin="round"/></svg>
<span class="t" style="left:859px;top:179px;color:#3a96f0;letter-spacing:-0.013px;">Export messages to Excel...</span>
<svg class="abs" style="left:837px;top:206px" width="16" height="16" viewBox="0 0 16 16"><path d="M9.2 1 L6.2 9.5" stroke="#5a8fd0" stroke-width="1.5" fill="none"/><path d="M13.4 3.2 L7 10.5" stroke="#7aa8e0" stroke-width="1.5" fill="none"/><ellipse cx="4.6" cy="11.8" rx="2.1" ry="2.6" fill="none" stroke="#2f6cc0" stroke-width="1.5"/><ellipse cx="9" cy="12.5" rx="2.1" ry="2.3" fill="none" stroke="#2f6cc0" stroke-width="1.5"/></svg>
<span class="t" style="left:859px;top:208px;color:#3a96f0;letter-spacing:0.125px;">Cut</span>
<svg class="abs" style="left:837px;top:228px" width="16" height="16" viewBox="0 0 16 16"><path d="M.7 .7 H6.6 L9.4 3.5 V10.6 H.7 Z" fill="#f4f8fd" stroke="#5a8fd0" stroke-width="1"/><path d="M5.7 4.7 H11.7 L14.6 7.6 V15.3 H5.7 Z" fill="#e6f0fc" stroke="#3c78c8" stroke-width="1"/><path d="M11.7 4.7 V7.6 H14.6" fill="none" stroke="#3c78c8" stroke-width=".8"/></svg>
<span class="t" style="left:859px;top:230px;color:#3a96f0;letter-spacing:0.078px;">Copy</span>
<svg class="abs" style="left:837px;top:250px" width="16" height="16" viewBox="0 0 16 16"><rect x=".7" y="1.8" width="11" height="13.4" rx="1.4" fill="#d8964a" stroke="#a8641c" stroke-width="1"/><rect x="3.6" y=".6" width="5.2" height="2.6" rx=".8" fill="#c0c0c0" stroke="#787878" stroke-width=".7"/><path d="M5.7 4.7 H11.7 L14.6 7.6 V15.3 H5.7 Z" fill="#eaf2fc" stroke="#3c78c8" stroke-width="1"/><path d="M11.7 4.7 V7.6 H14.6" fill="none" stroke="#3c78c8" stroke-width=".8"/></svg>
<span class="t" style="left:859px;top:252px;color:#3a96f0;letter-spacing:-0.328px;">Paste</span>
<svg class="abs" style="left:837px;top:272px" width="16" height="16" viewBox="0 0 16 16"><path d="M1.3 2h14v9.4H11L7.6 15v-3.6H1.3z" fill="#000" opacity=".07"/><path d="M.9 1.6h14v9.4H10.8L7.3 14.6v-3.6H.9z" fill="#000" opacity=".06"/><path d="M.2 1h14.2v9.4H10.3L7 14v-3.6H.2z" fill="#e7e7e7"/><path d="M2 4.5h11M2 6.5h11M2 8.5h11" stroke="#b0b0b0" stroke-width="1"/><path d="M3.6 14.8 L4.6 11.4 L12.4 4.8 L15 7.6 L7.2 14.2 Z" fill="#f7c35a" stroke="#b5791c" stroke-width=".8" stroke-linejoin="round"/><path d="M3.6 14.8 L4.6 11.4 L7.2 14.2Z" fill="#f6e3c0" stroke="#b5791c" stroke-width=".6"/><path d="M3.6 14.8l.5-1.5 1 .9z" fill="#333"/><path d="M11.2 5.8 L13.9 8.6" stroke="#d06a6a" stroke-width="1.2"/></svg>
<span class="t" style="left:859px;top:274px;color:#3a96f0;letter-spacing:-0.018px;">Edit...</span>
<svg class="abs" style="left:837px;top:294px" width="16" height="16" viewBox="0 0 16 16"><path d="M1.3 2h14v9.4H11L7.6 15v-3.6H1.3z" fill="#000" opacity=".07"/><path d="M.9 1.6h14v9.4H10.8L7.3 14.6v-3.6H.9z" fill="#000" opacity=".06"/><path d="M.2 1h14.2v9.4H10.3L7 14v-3.6H.2z" fill="#e7e7e7"/><path d="M2 4.5h11M2 6.5h11M2 8.5h11" stroke="#b0b0b0" stroke-width="1"/><rect x="8" y="9.5" width="7.4" height="5.8" rx="1" fill="#d98a3a" stroke="#b06a22" stroke-width=".9"/><path d="M8.3 11h6.8" stroke="#a05a18" stroke-width=".8"/></svg>
<span class="t" style="left:859px;top:296px;color:#3a96f0;letter-spacing:-0.027px;">Archive</span>
<svg class="abs" style="left:837px;top:316px" width="16" height="16" viewBox="0 0 16 16"><path d="M1.3 2h14v9.4H11L7.6 15v-3.6H1.3z" fill="#000" opacity=".07"/><path d="M.9 1.6h14v9.4H10.8L7.3 14.6v-3.6H.9z" fill="#000" opacity=".06"/><path d="M.2 1h14.2v9.4H10.3L7 14v-3.6H.2z" fill="#e7e7e7"/><path d="M2 4.5h11M2 6.5h11M2 8.5h11" stroke="#b0b0b0" stroke-width="1"/><circle cx="12.3" cy="12.2" r="3.1" fill="#f08030" stroke="#c85a10" stroke-width="1"/><path d="M11 10.9l2.6 2.6M13.6 10.9l-2.6 2.6" stroke="#fff" stroke-width="1"/></svg>
<span class="t" style="left:859px;top:318px;color:#3a96f0;letter-spacing:-0.245px;">Remove</span>
<svg class="abs" style="left:840px;top:339px" width="16" height="16" viewBox="0 0 16 16"><rect x="2.2" y="3.7" width="5.6" height="5.6" rx="2" fill="#f4a0a0" stroke="#dc1826" stroke-width="1.4"/></svg>
<span class="t" style="left:859px;top:340px;color:#3a96f0;letter-spacing:0.116px;">Disable</span>
<svg class="abs" style="left:837px;top:360px" width="16" height="16" viewBox="0 0 16 16"><path d="M1.3 2h14v9.4H11L7.6 15v-3.6H1.3z" fill="#000" opacity=".07"/><path d="M.9 1.6h14v9.4H10.8L7.3 14.6v-3.6H.9z" fill="#000" opacity=".06"/><path d="M.2 1h14.2v9.4H10.3L7 14v-3.6H.2z" fill="#e7e7e7"/><path d="M8.6 4.5h4.4M8.6 6.5h4.4M2 8.5h11" stroke="#b0b0b0" stroke-width="1"/><rect x=".8" y="1.2" width="7" height="5.8" rx="1.4" fill="#5a5a5a"/><path d="M2.4 4l1.5 1.5 2.6-3" fill="none" stroke="#fff" stroke-width="1.1"/></svg>
<span class="t" style="left:859px;top:362px;color:#333;letter-spacing:0.104px;">Resolve now...</span>
<svg class="abs" style="left:837px;top:382px" width="16" height="16" viewBox="0 0 16 16"><path d="M1.3 2h14v9.4H11L7.6 15v-3.6H1.3z" fill="#000" opacity=".07"/><path d="M.9 1.6h14v9.4H10.8L7.3 14.6v-3.6H.9z" fill="#000" opacity=".06"/><path d="M.2 1h14.2v9.4H10.3L7 14v-3.6H.2z" fill="#e7e7e7"/><path d="M2 4.5h11M2 6.5h11M2 8.5h11" stroke="#b0b0b0" stroke-width="1"/><rect x="8" y="12" width="2" height="3.5" fill="#d04040"/><rect x="10.5" y="9.5" width="2" height="6" fill="#3c78d8"/><rect x="13" y="11" width="2" height="4.5" fill="#40a040"/></svg>
<span class="t" style="left:859px;top:384px;color:#3a96f0;letter-spacing:0.014px;">Refresh Impact...</span>
<svg class="abs" style="left:837px;top:404px" width="16" height="16" viewBox="0 0 16 16"><rect x="1" y="1.5" width="13" height="13.5" rx="1" fill="#fff" stroke="#a0a0a0" stroke-width=".8"/><path d="M1 2.5 Q1 1.5 2 1.5 H13 Q14 1.5 14 2.5 V6 H1Z" fill="#e03838"/><rect x="3" y=".3" width="2" height="3" rx=".6" fill="#fff" stroke="#c02020" stroke-width=".5"/><rect x="10" y=".3" width="2" height="3" rx=".6" fill="#fff" stroke="#c02020" stroke-width=".5"/><text x="3.2" y="12.8" font-family="Liberation Sans,sans-serif" font-size="6.5" fill="#555">17</text><path d="M10.5 9 L15.5 12.2 L10.5 15.6 Z" fill="#3c78d8" stroke="#2a5cb0" stroke-width=".6"/></svg>
<span class="t" style="left:859px;top:406px;color:#3a96f0;letter-spacing:0.186px;">Shift start time...</span>
<svg class="abs" style="left:837px;top:426px" width="16" height="16" viewBox="0 0 16 16"><path d="M.5 8 Q8 .8 15.5 8 Q8 15 .5 8Z" fill="#fff" stroke="#e4b092" stroke-width="1.3"/><circle cx="8" cy="7.8" r="3.8" fill="#7d9cea" stroke="#5a7cd8" stroke-width=".7"/><circle cx="8" cy="7.8" r="1.3" fill="#101020"/><circle cx="6.6" cy="6.2" r=".9" fill="#fff" opacity=".9"/></svg>
<span class="t" style="left:859px;top:428px;color:#3a96f0;letter-spacing:-0.018px;">Preview</span>
<svg class="abs" style="left:837px;top:448px" width="16" height="16" viewBox="0 0 16 16"><rect x=".7" y="2.6" width="14" height="9.6" fill="#e2ecfb" stroke="#3c78c8" stroke-width="1"/><path d="M1 3 L7.7 8.4 L14.4 3" fill="#f4f8fe" stroke="#3c78c8" stroke-width="1"/><path d="M6.5 10.13 H10.55 V8 L15.5 11.8 L10.55 15.6 V13.47 H6.5 Z" fill="#8fcf6e" stroke="#2f8a1e" stroke-width="1" stroke-linejoin="round"/></svg>
<span class="t" style="left:859px;top:450px;color:#3a96f0;letter-spacing:-0.003px;">Send as e-mail...</span>
<svg class="abs" style="left:837px;top:470px" width="16" height="16" viewBox="0 0 16 16"><path d="M3.5 1.5 H11 L14.5 5 V15.4 H3.5 Z" fill="#d4e3f7" stroke="#3c78c8" stroke-width="1" stroke-linejoin="round"/><path d="M11 1.5 V5 H14.5" fill="#eef4fd" stroke="#3c78c8" stroke-width=".8"/><path d="M.6 5.6 Q.6 4.8 1.4 4.8 H10 Q10.8 4.8 10.8 5.6 V10.6 Q10.8 11.4 10 11.4 H1.4 Q.6 11.4 .6 10.6Z" fill="#e0e0e0" stroke="#c6c6c6" stroke-width=".7"/><path d="M6.2 9.58 H10.34 V7.4 L15.399999999999999 11.3 L10.34 15.2 V13.02 H6.2 Z" fill="#8fcf6e" stroke="#2f8a1e" stroke-width="1" stroke-linejoin="round"/></svg>
<span class="t" style="left:859px;top:472px;color:#3a96f0;letter-spacing:0.115px;">Create template...</span>
<svg class="abs" style="left:837px;top:492px" width="16" height="16" viewBox="0 0 16 16"><path d="M3.5 1.5 H11 L14.5 5 V15.4 H3.5 Z" fill="#d4e3f7" stroke="#3c78c8" stroke-width="1" stroke-linejoin="round"/><path d="M11 1.5 V5 H14.5" fill="#eef4fd" stroke="#3c78c8" stroke-width=".8"/><path d="M.6 5.6 Q.6 4.8 1.4 4.8 H10 Q10.8 4.8 10.8 5.6 V10.6 Q10.8 11.4 10 11.4 H1.4 Q.6 11.4 .6 10.6Z" fill="#e0e0e0" stroke="#c6c6c6" stroke-width=".7"/><path d="M6.2 9.58 H10.34 V7.4 L15.399999999999999 11.3 L10.34 15.2 V13.02 H6.2 Z" fill="#8fcf6e" stroke="#2f8a1e" stroke-width="1" stroke-linejoin="round"/></svg>
<span class="t" style="left:859px;top:494px;color:#3a96f0;letter-spacing:0.059px;">Export...</span>
<svg class="abs" style="left:837px;top:521px" width="16" height="16" viewBox="0 0 16 16"><path d="M2.4 .8 L8 5.4 L13.6 .8" fill="none" stroke="#5a6470" stroke-width="1.1"/><rect x="1" y="5.2" width="14" height="10.4" rx=".6" fill="#33363a" stroke="#202226" stroke-width=".8"/><rect x="1.9" y="6" width="12.2" height="6.8" fill="#6ab6f6"/><path d="M1.9 6h12.2L1.9 11z" fill="#8ccafa" opacity=".6"/><path d="M3.2 14.2h2" stroke="#e03030" stroke-width="1"/><path d="M6.5 14.2h6.5" stroke="#70747a" stroke-width="1" stroke-dasharray="1 1"/></svg>
<span class="t" style="left:859px;top:523px;color:#3a96f0;letter-spacing:0.328px;">Watch the video-tutorials...</span>
<div class="b" style="left:835px;top:199px;width:236px;height:1px;background:#c8c8c8;"></div>
<div class="b" style="left:835px;top:514px;width:236px;height:1px;background:#c8c8c8;"></div>
<div class="b" style="left:830px;top:567px;width:254px;height:4px;background:#f5f5f5;"></div>
<div class="b" style="left:952px;top:569px;width:2px;height:2px;background:#6e6e6e;"></div>
<div class="b" style="left:956px;top:569px;width:2px;height:2px;background:#6e6e6e;"></div>
<div class="b" style="left:960px;top:569px;width:2px;height:2px;background:#6e6e6e;"></div>
<div class="b" style="left:830px;top:571px;width:254px;height:23px;background:#c0c0c0;"></div>
<span class="t" style="left:833px;top:576px;font-weight:bold;-webkit-text-stroke:0;letter-spacing:0.136px;">Information</span>
<div class="b" style="left:830px;top:594px;width:254px;height:185px;background:#ffffe1;"></div>
<svg class="abs" style="left:838px;top:603px" width="14" height="14" viewBox="0 0 16 16"><defs><linearGradient id="inf" x1="0" y1="0" x2="0" y2="1"><stop offset="0" stop-color="#9cc0f0"/><stop offset="1" stop-color="#3f7cd4"/></linearGradient></defs><circle cx="8" cy="8" r="7.3" fill="url(#inf)" stroke="#aebfd6" stroke-width="1.2"/><circle cx="8" cy="8" r="6.2" fill="none" stroke="#3a6cc0" stroke-width=".8"/><circle cx="8" cy="4.7" r="1.2" fill="#fff"/><path d="M6.4 7h2.6v4.4h1v1.1H6.2v-1.1h1.1V8.1h-.9z" fill="#fff"/></svg>
<div class="t" style="left:857px;top:604px;line-height:15px;white-space:normal;width:225px;-webkit-text-stroke:.1px;letter-spacing:0.271px"><span>The message group <a href="#">Default</a> contains</span><br>unpublished changes.</div>
<span class="t" style="left:6px;top:785px;color:#6d6d6d;font-size:12px;-webkit-text-stroke:.1px;letter-spacing:0.105px;">C:\IBI-aws\Admin\Data.xml</span>
<svg class="abs" style="left:1072px;top:789px" width="10" height="10" viewBox="0 0 10 10"><g fill="#b0b0b0"><rect x="8" y="0" width="2" height="2"/><rect x="4" y="4" width="2" height="2"/><rect x="8" y="4" width="2" height="2"/><rect x="0" y="8" width="2" height="2"/><rect x="4" y="8" width="2" height="2"/><rect x="8" y="8" width="2" height="2"/></g></svg>
</body></html>
